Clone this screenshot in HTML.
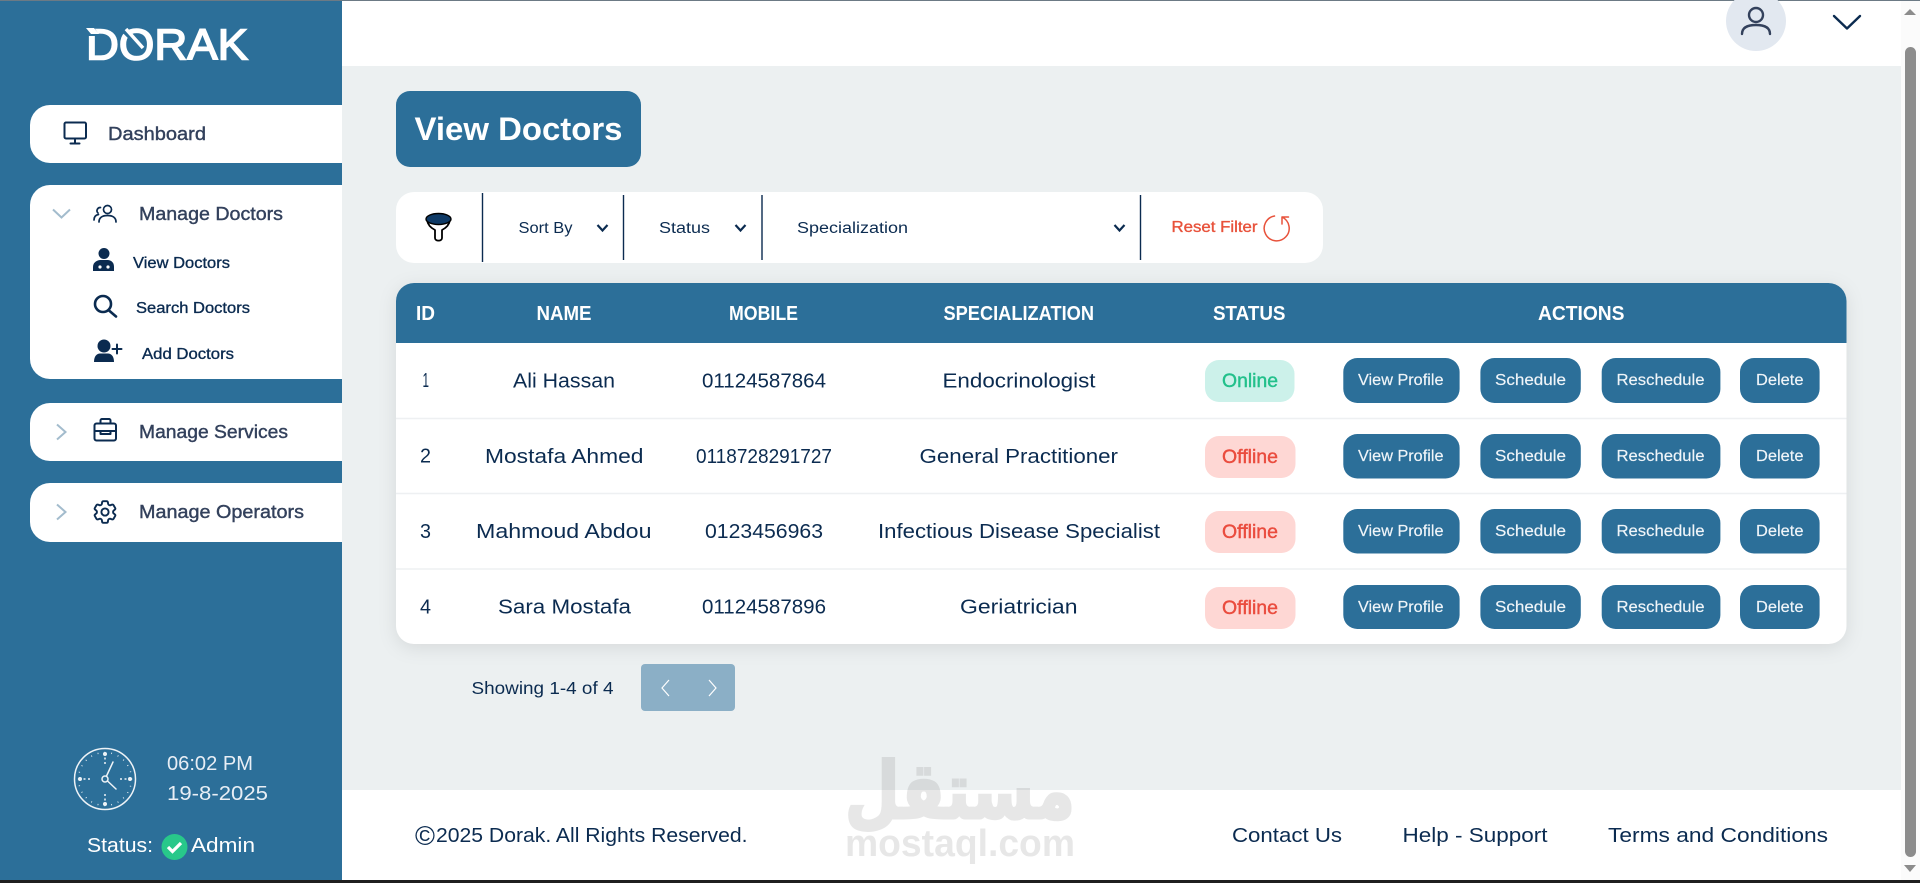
<!DOCTYPE html>
<html lang="en">
<head>
<meta charset="utf-8">
<title>Dorak - View Doctors</title>
<style>
html,body{margin:0;padding:0;width:1920px;height:883px;overflow:hidden;background:#fff}
svg{display:block;position:absolute;left:0;top:0}
text{font-family:"Liberation Sans",sans-serif;font-size:20.5px;fill:#0b2b50;white-space:pre}
.menu{font-size:18.5px;fill:#33415c;stroke:#33415c;stroke-width:.4}
.sub{font-size:15.5px;stroke:#0b2b50;stroke-width:.35}
.fl{font-size:15.5px}
.th{font-size:20.5px;font-weight:700;fill:#fff}
.btn{font-size:15.5px;fill:#f0f5f9;stroke:#f0f5f9;stroke-width:.15}
.lt{font-size:20.5px;fill:#e8eef5}
.wh{font-size:20.5px;fill:#fff}
.ic{fill:none;stroke:#0b2b50;stroke-width:2;stroke-linecap:round;stroke-linejoin:round}
.chev{fill:none;stroke:#a3bccd;stroke-width:2}
.sel{fill:none;stroke:#0b2b50;stroke-width:2.2}
.b{fill:#2c6f99}
.div{stroke:#0b2b50;stroke-width:1.4}
.row{stroke:#eef0f2;stroke-width:1.5}
</style>
</head>
<body>
<svg width="1920" height="883" viewBox="0 0 1920 883" xmlns="http://www.w3.org/2000/svg">
<!-- page -->
<rect x="0" y="0" width="1920" height="883" fill="#fff"/>
<rect x="342" y="66" width="1559" height="724" fill="#ecf0f1"/>
<rect x="0" y="0" width="342" height="880" fill="#2c6f99"/>
<rect x="0" y="0" width="1920" height="1" fill="#6c7a85"/>
<rect x="0" y="880" width="1920" height="3" fill="#1f1f1f"/>

<!-- logo -->
<text x="86" y="59.500" textLength="162" lengthAdjust="spacingAndGlyphs" style="font-size:43.500px;fill:#fff;stroke:#fff;stroke-width:1.600">DORAK</text>
<path d="M84 26 L93 26 L100 36 L84 36Z" fill="#2c6f99"/>
<path d="M86 28h8l5 6h-8z" fill="#fff"/>
<path d="M121 28 L137 44" stroke="#2c6f99" stroke-width="4.500" fill="none"/>
<path d="M126 29 L143 48" stroke="#fff" stroke-width="3.500" fill="none"/>

<!-- sidebar cards -->
<path d="M342 105H50a20 20 0 0 0-20 20v18a20 20 0 0 0 20 20H342z" fill="#fff"/>
<path d="M342 185H50a20 20 0 0 0-20 20v154a20 20 0 0 0 20 20H342z" fill="#fff"/>
<path d="M342 403H50a20 20 0 0 0-20 20v18a20 20 0 0 0 20 20H342z" fill="#fff"/>
<path d="M342 483H50a20 20 0 0 0-20 20v19a20 20 0 0 0 20 20H342z" fill="#fff"/>

<!-- dashboard -->
<g class="ic"><rect x="64.5" y="122.500" width="21.500" height="16" rx="1.500"/><path d="M75 139v4M70.500 143.500h9"/></g>
<text class="menu" x="108" y="140" textLength="98" lengthAdjust="spacingAndGlyphs">Dashboard</text>

<!-- manage doctors -->
<path class="chev" d="M53 209.500 61.500 217.500 70 209.500"/>
<g class="ic" style="stroke-width:1.700"><circle cx="107.500" cy="209.500" r="4"/><path d="M99 222c0-4.500 3.500-6.500 8.500-6.500s8.500 2 8.500 6.500"/><path d="M100.500 207.500a3.200 3.200 0 0 0-2.500 5.500"/><path d="M94 220c0-3 1.500-5 4.500-5.500"/></g>
<text class="menu" x="139" y="220" textLength="144" lengthAdjust="spacingAndGlyphs">Manage Doctors</text>

<circle cx="104" cy="253.500" r="5.500" fill="#0b2b50"/>
<path d="M93 271v-4c0-4 3-6.500 7-7h8c4 .5 6 3 6 7v4z" fill="#0b2b50"/>
<circle cx="100" cy="267" r="1.600" fill="#fff"/><circle cx="108" cy="267" r="1.600" fill="#fff"/>
<text class="sub" x="133" y="268" textLength="97" lengthAdjust="spacingAndGlyphs">View Doctors</text>

<g class="ic" style="stroke-width:2.600"><circle cx="103" cy="304" r="8"/><path d="M109 310.500 116 316.500"/></g>
<text class="sub" x="136" y="313" textLength="114" lengthAdjust="spacingAndGlyphs">Search Doctors</text>

<circle cx="104" cy="346" r="6.500" fill="#0b2b50"/>
<path d="M94 362c0-6 3-8.500 6-8.500h8c3 0 6 2.500 6 8.500z" fill="#0b2b50"/>
<path class="ic" d="M117 344.500v9M112.500 349h9"/>
<text class="sub" x="142" y="359" textLength="92" lengthAdjust="spacingAndGlyphs">Add Doctors</text>

<!-- manage services -->
<path class="chev" d="M57 424.500 65.500 432 57 439.500"/>
<g class="ic"><rect x="94.500" y="423.500" width="21.500" height="17" rx="2"/><path d="M100.500 423v-2.500a1.500 1.500 0 0 1 1.500-1.500h7a1.500 1.500 0 0 1 1.500 1.500v2.500"/><path d="M94.500 431h6M110.500 431h5.500"/><rect x="100.500" y="431" width="10" height="3"/></g>
<text class="menu" x="139" y="438" textLength="149" lengthAdjust="spacingAndGlyphs">Manage Services</text>

<!-- manage operators -->
<path class="chev" d="M57 504.500 65.500 512 57 519.500"/>
<g transform="translate(90.600 497.600) scale(1.200)" fill="none" stroke="#0b2b50" stroke-width="1.600" stroke-linejoin="round"><path d="M9.594 3.940c.09-.542.56-.94 1.110-.94h2.593c.55 0 1.020.398 1.110.94l.213 1.281c.063.374.313.686.645.87.074.04.147.083.22.127.324.196.72.257 1.075.124l1.217-.456a1.125 1.125 0 0 1 1.370.49l1.296 2.247a1.125 1.125 0 0 1-.26 1.431l-1.003.827c-.293.24-.438.613-.431.992a6.759 6.759 0 0 1 0 .255c-.007.378.138.75.43.99l1.005.828c.424.35.534.954.26 1.430l-1.298 2.247a1.125 1.125 0 0 1-1.369.491l-1.217-.456c-.355-.133-.75-.072-1.076.124a6.570 6.570 0 0 1-.22.128c-.331.183-.581.495-.644.869l-.213 1.280c-.09.543-.56.941-1.110.941h-2.594c-.55 0-1.020-.398-1.110-.94l-.213-1.281c-.062-.374-.312-.686-.644-.87a6.520 6.520 0 0 1-.22-.127c-.325-.196-.72-.257-1.076-.124l-1.217.456a1.125 1.125 0 0 1-1.369-.49l-1.297-2.247a1.125 1.125 0 0 1 .26-1.431l1.004-.827c.292-.24.437-.613.43-.992a6.932 6.932 0 0 1 0-.255c.007-.378-.138-.75-.43-.99l-1.004-.828a1.125 1.125 0 0 1-.26-1.430l1.297-2.247a1.125 1.125 0 0 1 1.370-.491l1.216.456c.356.133.751.072 1.076-.124.072-.044.146-.087.22-.128.332-.183.582-.495.644-.869l.214-1.281z"/><circle cx="12" cy="12" r="3"/></g>
<text class="menu" x="139" y="518" textLength="165" lengthAdjust="spacingAndGlyphs">Manage Operators</text>

<!-- clock -->
<g fill="none" stroke="#eef3f7">
<circle cx="105" cy="779" r="30.500" stroke-width="1.500"/>
<circle cx="105" cy="779" r="26.500" stroke-width="1.400" pathLength="60" stroke-dasharray=".3 2.200"/>
<path d="M105 757.500v2M105 762v2M105 794v2M105 798.500v2M83.500 779h2M88 779h2M120 779h2M124.500 779h2" stroke-width="1.500"/>
<circle cx="105" cy="779" r="3" stroke-width="1.500"/>
<path d="M106.500 776 113 762M107.500 781 116 789" stroke-width="1.500" stroke-linecap="round"/>
</g>
<g fill="#eef3f7"><circle cx="105" cy="754" r="2"/><circle cx="105" cy="804" r="2"/><circle cx="80" cy="779" r="2"/><circle cx="130" cy="779" r="2"/></g>
<text class="lt" x="167" y="770" textLength="86" lengthAdjust="spacingAndGlyphs">06:02 PM</text>
<text class="lt" x="167" y="800" textLength="101" lengthAdjust="spacingAndGlyphs">19-8-2025</text>
<text class="wh" x="87" y="852" textLength="66" lengthAdjust="spacingAndGlyphs">Status:</text>
<circle cx="174.500" cy="847" r="13" fill="#28c88a"/>
<path d="M168 847 172.500 851.500 181 843" fill="none" stroke="#fff" stroke-width="3.200"/>
<text class="wh" x="191" y="852" textLength="64" lengthAdjust="spacingAndGlyphs">Admin</text>

<!-- top bar -->
<circle cx="1756" cy="21" r="30" fill="#e2e8f0"/>
<circle cx="1756" cy="15" r="7" fill="none" stroke="#33415c" stroke-width="2.400"/>
<path d="M1742 34c0-6 5-9 14-9s14 3 14 9" fill="none" stroke="#33415c" stroke-width="2.400" stroke-linecap="round"/>
<path d="M1834 16 1847 28.500 1860 16" fill="none" stroke="#0b2b50" stroke-width="2.400" stroke-linecap="round" stroke-linejoin="round"/>

<!-- scrollbar -->
<rect x="1901" y="1" width="19" height="879" fill="#fbfbfb"/>
<rect x="1905" y="47" width="11" height="810" rx="5.500" fill="#8c8c8c"/>
<path d="M1904 15h12l-6-6z" fill="#8c8c8c"/>
<path d="M1904 865h12l-6 7z" fill="#8c8c8c"/>

<!-- page title -->
<rect x="396" y="91" width="245" height="76" rx="14" class="b"/>
<text x="414.500" y="140" textLength="208" lengthAdjust="spacingAndGlyphs" style="font-size:32px;font-weight:700;fill:#fff">View Doctors</text>

<!-- filter bar -->
<rect x="396" y="192" width="927" height="71" rx="18" fill="#fff"/>
<path class="div" d="M482.500 193v69M623.500 195v65M762 195v65M1140.500 195v65"/>
<path d="M427 220c1 6 6 9 8 10v8c0 3.500 7 3.500 7 0v-8c2-1 7-4 8-10" fill="#fff" stroke="#000" stroke-width="1.800" stroke-linejoin="round"/>
<ellipse cx="438.500" cy="219" rx="12.500" ry="5.500" fill="#0f3a66" stroke="#000" stroke-width="1.400"/>
<text class="fl" x="518.500" y="233" textLength="54" lengthAdjust="spacingAndGlyphs">Sort By</text>
<path class="sel" d="M597.500 225 602.500 230.500 607.500 225"/>
<text class="fl" x="659" y="233" textLength="51" lengthAdjust="spacingAndGlyphs">Status</text>
<path class="sel" d="M735.500 225 740.500 230.500 745.500 225"/>
<text class="fl" x="797" y="233" textLength="111" lengthAdjust="spacingAndGlyphs">Specialization</text>
<path class="sel" d="M1114.500 225 1119.500 230.500 1124.500 225"/>
<text x="1171.500" y="232" textLength="86" lengthAdjust="spacingAndGlyphs" style="font-size:15.500px;fill:#e8523b;stroke:#e8523b;stroke-width:.35">Reset Filter</text>
<path d="M1274.500 216A12.500 12.500 0 1 0 1282 217M1288.500 217H1282V224" fill="none" stroke="#e8523b" stroke-width="1.500" stroke-linecap="round" stroke-linejoin="round"/>

<!-- table -->
<rect x="396" y="283" width="1450.500" height="361" rx="18" fill="#fff" style="filter:drop-shadow(0 4px 9px rgba(0,0,0,.09))"/>
<path d="M396 343V301a18 18 0 0 1 18-18H1828.500a18 18 0 0 1 18 18V343z" class="b"/>
<text class="th" x="416" y="320" textLength="19" lengthAdjust="spacingAndGlyphs">ID</text>
<text class="th" x="536.500" y="320" textLength="55" lengthAdjust="spacingAndGlyphs">NAME</text>
<text class="th" x="729" y="320" textLength="69" lengthAdjust="spacingAndGlyphs">MOBILE</text>
<text class="th" x="943.500" y="320" textLength="150.500" lengthAdjust="spacingAndGlyphs">SPECIALIZATION</text>
<text class="th" x="1213" y="320" textLength="72.500" lengthAdjust="spacingAndGlyphs">STATUS</text>
<text class="th" x="1538" y="320" textLength="86.500" lengthAdjust="spacingAndGlyphs">ACTIONS</text>
<path class="row" d="M396 418.500H1846.500M396 493.500H1846.500M396 569H1846.500"/>

<!-- row 1 -->
<text x="422.500" y="387" textLength="6.500" lengthAdjust="spacingAndGlyphs">1</text>
<text x="513" y="387.500" textLength="102" lengthAdjust="spacingAndGlyphs">Ali Hassan</text>
<text x="702" y="387.500" textLength="124" lengthAdjust="spacingAndGlyphs">01124587864</text>
<text x="942.500" y="387.500" textLength="153" lengthAdjust="spacingAndGlyphs">Endocrinologist</text>
<rect x="1205" y="360" width="89.500" height="42" rx="14" fill="#ccf1ea"/>
<text x="1222" y="387" textLength="56" lengthAdjust="spacingAndGlyphs" style="font-size:19px;fill:#22c08b;stroke:#22c08b;stroke-width:.4">Online</text>
<g class="b"><rect x="1343.300" y="358" width="116.300" height="45" rx="14"/><rect x="1480.400" y="358" width="100.400" height="45" rx="14"/><rect x="1601.700" y="358" width="118.700" height="45" rx="14"/><rect x="1740" y="358" width="79.600" height="45" rx="14"/></g>
<text class="btn" x="1358" y="385" textLength="85.500" lengthAdjust="spacingAndGlyphs">View Profile</text>
<text class="btn" x="1495" y="385" textLength="71" lengthAdjust="spacingAndGlyphs">Schedule</text>
<text class="btn" x="1616.500" y="385" textLength="88" lengthAdjust="spacingAndGlyphs">Reschedule</text>
<text class="btn" x="1756" y="385" textLength="47.500" lengthAdjust="spacingAndGlyphs">Delete</text>

<!-- row 2 -->
<text x="420" y="462.500" textLength="11" lengthAdjust="spacingAndGlyphs">2</text>
<text x="485" y="463" textLength="158.500" lengthAdjust="spacingAndGlyphs">Mostafa Ahmed</text>
<text x="696" y="463" textLength="136" lengthAdjust="spacingAndGlyphs">0118728291727</text>
<text x="919.500" y="463" textLength="198.500" lengthAdjust="spacingAndGlyphs">General Practitioner</text>
<rect x="1205" y="436" width="90.500" height="42" rx="14" fill="#fed7d4"/>
<text x="1222" y="463" textLength="56" lengthAdjust="spacingAndGlyphs" style="font-size:19px;fill:#ea4c3e;stroke:#ea4c3e;stroke-width:.4">Offline</text>
<g class="b"><rect x="1343.300" y="434" width="116.300" height="44.500" rx="14"/><rect x="1480.400" y="434" width="100.400" height="44.500" rx="14"/><rect x="1601.700" y="434" width="118.700" height="44.500" rx="14"/><rect x="1740" y="434" width="79.600" height="44.500" rx="14"/></g>
<text class="btn" x="1358" y="461" textLength="85.500" lengthAdjust="spacingAndGlyphs">View Profile</text>
<text class="btn" x="1495" y="461" textLength="71" lengthAdjust="spacingAndGlyphs">Schedule</text>
<text class="btn" x="1616.500" y="461" textLength="88" lengthAdjust="spacingAndGlyphs">Reschedule</text>
<text class="btn" x="1756" y="461" textLength="47.500" lengthAdjust="spacingAndGlyphs">Delete</text>

<!-- row 3 -->
<text x="420" y="538" textLength="11" lengthAdjust="spacingAndGlyphs">3</text>
<text x="476" y="538" textLength="175.500" lengthAdjust="spacingAndGlyphs">Mahmoud Abdou</text>
<text x="705" y="538" textLength="118" lengthAdjust="spacingAndGlyphs">0123456963</text>
<text x="878" y="538" textLength="282" lengthAdjust="spacingAndGlyphs">Infectious Disease Specialist</text>
<rect x="1205" y="511" width="90.500" height="42" rx="14" fill="#fed7d4"/>
<text x="1222" y="538" textLength="56" lengthAdjust="spacingAndGlyphs" style="font-size:19px;fill:#ea4c3e;stroke:#ea4c3e;stroke-width:.4">Offline</text>
<g class="b"><rect x="1343.300" y="509" width="116.300" height="44.500" rx="14"/><rect x="1480.400" y="509" width="100.400" height="44.500" rx="14"/><rect x="1601.700" y="509" width="118.700" height="44.500" rx="14"/><rect x="1740" y="509" width="79.600" height="44.500" rx="14"/></g>
<text class="btn" x="1358" y="536" textLength="85.500" lengthAdjust="spacingAndGlyphs">View Profile</text>
<text class="btn" x="1495" y="536" textLength="71" lengthAdjust="spacingAndGlyphs">Schedule</text>
<text class="btn" x="1616.500" y="536" textLength="88" lengthAdjust="spacingAndGlyphs">Reschedule</text>
<text class="btn" x="1756" y="536" textLength="47.500" lengthAdjust="spacingAndGlyphs">Delete</text>

<!-- row 4 -->
<text x="420" y="613.500" textLength="11" lengthAdjust="spacingAndGlyphs">4</text>
<text x="498" y="613.500" textLength="133" lengthAdjust="spacingAndGlyphs">Sara Mostafa</text>
<text x="702" y="613.500" textLength="124" lengthAdjust="spacingAndGlyphs">01124587896</text>
<text x="960" y="613.500" textLength="117.500" lengthAdjust="spacingAndGlyphs">Geriatrician</text>
<rect x="1205" y="587" width="90.500" height="42" rx="14" fill="#fed7d4"/>
<text x="1222" y="614" textLength="56" lengthAdjust="spacingAndGlyphs" style="font-size:19px;fill:#ea4c3e;stroke:#ea4c3e;stroke-width:.4">Offline</text>
<g class="b"><rect x="1343.300" y="585" width="116.300" height="44" rx="14"/><rect x="1480.400" y="585" width="100.400" height="44" rx="14"/><rect x="1601.700" y="585" width="118.700" height="44" rx="14"/><rect x="1740" y="585" width="79.600" height="44" rx="14"/></g>
<text class="btn" x="1358" y="612" textLength="85.500" lengthAdjust="spacingAndGlyphs">View Profile</text>
<text class="btn" x="1495" y="612" textLength="71" lengthAdjust="spacingAndGlyphs">Schedule</text>
<text class="btn" x="1616.500" y="612" textLength="88" lengthAdjust="spacingAndGlyphs">Reschedule</text>
<text class="btn" x="1756" y="612" textLength="47.500" lengthAdjust="spacingAndGlyphs">Delete</text>

<!-- pagination -->
<text x="471.500" y="694" textLength="142" lengthAdjust="spacingAndGlyphs" style="font-size:17.500px">Showing 1-4 of 4</text>
<rect x="641" y="664" width="94" height="47" rx="4" fill="#8bafc6"/>
<path d="M669 680 662 688 669 696M709 680 716 688 709 696" fill="none" stroke="#fff" stroke-width="1.200"/>

<!-- footer -->
<text x="415" y="845" textLength="20" lengthAdjust="spacingAndGlyphs" style="font-size:27px">©</text>
<text x="436" y="842" textLength="311.500" lengthAdjust="spacingAndGlyphs">2025 Dorak. All Rights Reserved.</text>
<text x="1232" y="842" textLength="110" lengthAdjust="spacingAndGlyphs">Contact Us</text>
<text x="1402.500" y="842" textLength="145" lengthAdjust="spacingAndGlyphs">Help - Support</text>
<text x="1608" y="842" textLength="220" lengthAdjust="spacingAndGlyphs">Terms and Conditions</text>

<!-- watermark -->
<text x="845" y="818" textLength="230" lengthAdjust="spacingAndGlyphs" opacity=".16" style="font-family:'DejaVu Sans',sans-serif;font-size:78px;font-weight:700;fill:#6e6e6e;stroke:#6e6e6e;stroke-width:3">مستقل</text>
<text x="845" y="856" textLength="230" lengthAdjust="spacingAndGlyphs" opacity=".16" style="font-size:38px;font-weight:700;fill:#6e6e6e">mostaql.com</text>
</svg>
</body>
</html>
